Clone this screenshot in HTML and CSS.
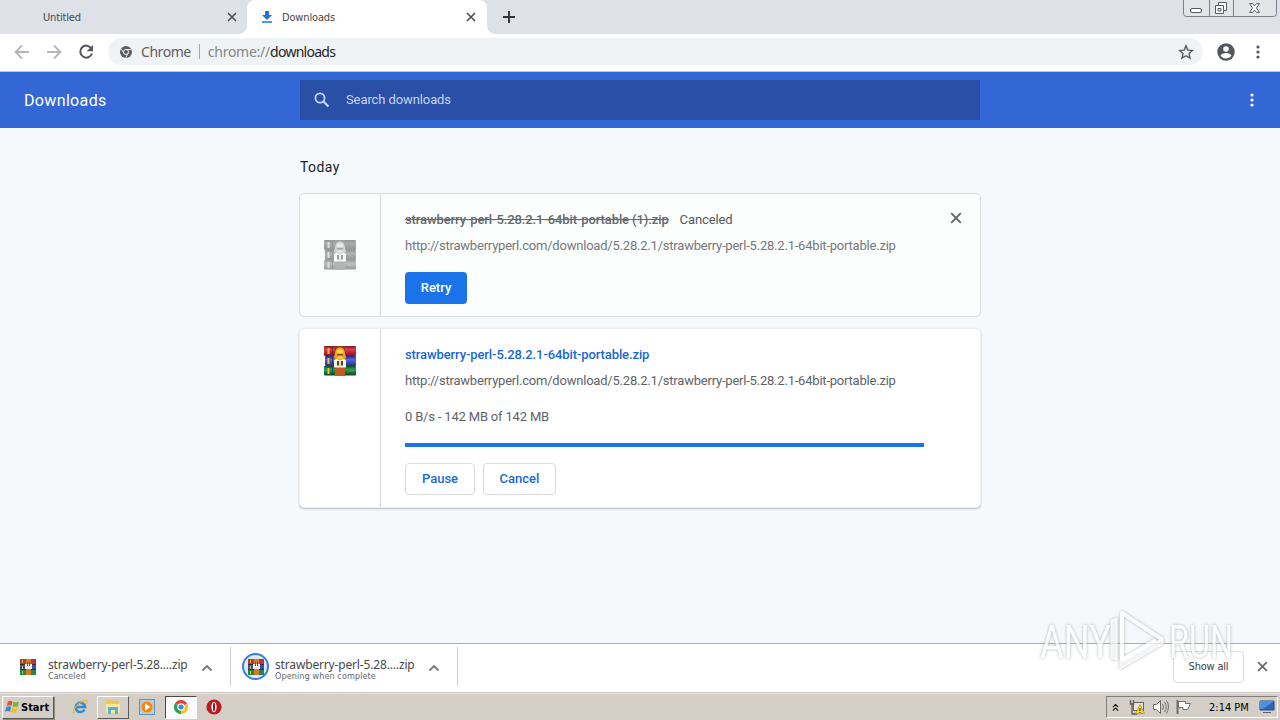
FILE: index.html
```html
<!DOCTYPE html>
<html lang="en">
<head>
<meta charset="utf-8">
<title>Downloads</title>
<link rel="stylesheet" href="styles.css">
</head>
<body>
<svg class="defs" width="0" height="0">
  <defs>
    <linearGradient id="red" x1="0" y1="0" x2="0" y2="1"><stop offset="0" stop-color="#7c1820"/><stop offset=".35" stop-color="#e03a50"/><stop offset="1" stop-color="#8a0f20"/></linearGradient>
    <linearGradient id="blue" x1="0" y1="0" x2="0" y2="1"><stop offset="0" stop-color="#252c78"/><stop offset=".35" stop-color="#5068dc"/><stop offset="1" stop-color="#252c88"/></linearGradient>
    <linearGradient id="green" x1="0" y1="0" x2="0" y2="1"><stop offset="0" stop-color="#0c4d26"/><stop offset=".35" stop-color="#28a050"/><stop offset="1" stop-color="#084820"/></linearGradient>
    <symbol id="rar" viewBox="0 0 32 30">
      <rect x="0" y="0" width="32" height="10" rx="1" fill="url(#red)"/>
      <rect x="1" y="10" width="31" height="10" rx="1" fill="url(#blue)"/>
      <rect x="0" y="20" width="32" height="9.500" rx="1" fill="url(#green)"/>
      <path d="M4.500 2v6M4.500 12v6M4.500 22v6" stroke="#f0c030" stroke-width="2"/>
      <path d="M8.500 1v8M8.500 11v8M8.500 21v8" stroke="#222" stroke-opacity=".5"/>
      <path d="M24 25h6" stroke="#60c080" stroke-opacity=".6"/>
      <rect x="11" y="0" width="10" height="30" fill="#c05a22"/>
      <path d="M11 0h10v5H11z" fill="#943528"/>
      <path d="M11.500 6q0-4.500 4.500-4.500T20.500 6l1.500 5-2 4h-8l-2-4z" fill="#f2a51c"/>
      <path d="M13 4.500q3-2.500 6 0v2.500h-6z" fill="#ffdc48"/>
      <path d="M13 8h6v1.500h-6z" fill="#8a4a1c"/>
      <path d="M13.500 10.500h5v2h-5z" fill="#ffd45c"/>
      <path d="M10 14l3-1 3 2 3-2 3 1v7.500H10z" fill="#f9f4ea"/>
      <path d="M13 15h2v4.500h-2zM17 15h2v4.500h-2z" fill="#56402e"/>
      <path d="M15 14h2v7h-2z" fill="#f3dcae"/>
    </symbol>
    <symbol id="rar-small" viewBox="0 0 16 16">
      <path d="M0 0h16v5H0z" fill="#bd3045"/><path d="M0 5h16v6H0z" fill="#414daf"/><path d="M0 11h16v5H0z" fill="#1c8a48"/>
      <path d="M0 5.500h16M0 10.500h16" stroke="#24314e"/>
      <path d="M2.500 1v3M2.500 7v3M2.500 12v3" stroke="#e0bb3c"/>
      <path d="M6 0h5v16H6z" fill="#d67b25"/><path d="M5 5h7v5H5z" fill="#f3efe8"/><path d="M7.500 3v4M9.500 3v4" stroke="#963a2c"/>
    </symbol>
    <symbol id="cross" viewBox="0 0 10 10"><path d="M1 1l8 8M9 1l-8 8" fill="none" stroke="currentColor" stroke-width="1.500"/></symbol>
    <symbol id="chevron" viewBox="0 0 12 8"><path d="M1.500 6.500L6 2l4.500 4.500" fill="none" stroke="currentColor" stroke-width="1.800"/></symbol>
    <symbol id="dots" viewBox="0 0 4 14"><circle cx="2" cy="2" r="1.600"/><circle cx="2" cy="7" r="1.600"/><circle cx="2" cy="12" r="1.600"/></symbol>
  </defs>
</svg>

<div class="screen">
  <div class="tabstrip">
    <div class="tab tab-idle"><span class="tab-title untitled">Untitled</span><svg class="x10"><use href="#cross"/></svg></div>
    <div class="tab tab-active">
      <svg class="dl-icon" viewBox="0 0 10 12"><path d="M3 0h4v4h3L5 9 0 4h3z" fill="#1a73e8"/><path d="M0 11h10" stroke="#1a73e8" stroke-width="1.500"/></svg>
      <span class="tab-title">Downloads</span><svg class="x10"><use href="#cross"/></svg>
    </div>
    <svg class="plus" viewBox="0 0 12 12"><path d="M6 0v12M0 6h12" stroke="#303338" stroke-width="1.900"/></svg>
    <svg class="window-controls" viewBox="0 0 94 18">
      <path d="M.5 0v13.500q0 3 3 3h87q3 0 3-3V0M26.500 0v16M50.500 0v16" fill="#e2e4e8" stroke="#7b7f86"/>
      <rect x="7.500" y="8.500" width="11" height="4" rx="1.500" fill="#fff" stroke="#55585e"/>
      <path d="M35.500 2.500h8v8h-3v3h-8v-8h3z" fill="#fff" stroke="#55585e"/><path d="M35.500 5.500h5v5M35 8.500h3v2.500h-3z" fill="none" stroke="#55585e"/>
      <path d="M66.500 3.500h3l2 2.500 2-2.500h3l-3 4.500 3 4.500h-3l-2-2.500-2 2.500h-3l3-4.500z" fill="#fff" stroke="#65686e"/>
    </svg>
  </div>

  <div class="toolbar">
    <svg class="nav" viewBox="0 0 16 16"><path d="M15 8H2M8 1.500L1.500 8 8 14.500" fill="none" stroke="#b4b6b9" stroke-width="1.800"/></svg>
    <svg class="nav" viewBox="0 0 16 16"><path d="M1 8h13M8 1.500L14.500 8 8 14.500" fill="none" stroke="#b4b6b9" stroke-width="1.800"/></svg>
    <svg class="nav" viewBox="0 0 16 16"><path d="M13.300 4.300A6 6 0 1 0 14 9.500" fill="none" stroke="#53565a" stroke-width="2"/><path d="M15 1v6.300H8.700z" fill="#53565a"/></svg>
    <div class="omnibox">
      <svg class="site-icon" viewBox="0 0 12 12"><circle cx="6" cy="6" r="6" fill="#5a5d61"/><circle cx="6" cy="6" r="2.500" fill="none" stroke="#f1f3f4"/><path d="M6 3.500h5.200M3.800 7.200L1.200 2.800M8.200 7.200L5.600 11.800" stroke="#f1f3f4" stroke-width=".9"/></svg>
      <span class="site-name">Chrome</span><i class="divider"></i><span class="scheme">chrome://</span><span class="host">downloads</span>
      <svg class="star" viewBox="0 0 16 16"><path d="M8 1.800l1.800 4.300 4.700.4L11 9.600l1 4.500-4-2.400-4 2.400 1-4.500-3.500-3.100 4.700-.4z" fill="none" stroke="#53565a" stroke-width="1.400"/></svg>
    </div>
    <svg class="avatar" viewBox="0 0 18 18"><circle cx="9" cy="9" r="8.700" fill="#53565a"/><circle cx="9" cy="6" r="2.800" fill="#fff"/><path d="M3.500 12.500Q5 9.900 9 9.900t5.500 2.600Q12.500 15.500 9 15.500t-5.500-3z" fill="#fff"/></svg>
    <svg class="menu"><use href="#dots"/></svg>
  </div>

  <header class="page-header">
    <h1>Downloads</h1>
    <div class="search"><svg viewBox="0 0 16 16"><circle cx="6" cy="6" r="4.600" fill="none" stroke="currentColor" stroke-width="1.800"/><path d="M9.500 9.500l5 5" stroke="currentColor" stroke-width="2.200"/></svg><span>Search downloads</span></div>
    <svg class="header-menu"><use href="#dots"/></svg>
  </header>

  <main>
    <h2>Today</h2>
    <section class="card canceled">
      <div class="card-icon"><svg><use href="#rar"/></svg></div>
      <div class="card-body">
        <div class="title-row"><span class="name">strawberry-perl-5.28.2.1-64bit-portable (1).zip</span><span class="tag">Canceled</span></div>
        <div class="url">http://strawberryperl.com/download/5.28.2.1/strawberry-perl-5.28.2.1-64bit-portable.zip</div>
        <button class="btn retry">Retry</button>
      </div>
      <svg class="remove"><use href="#cross"/></svg>
    </section>
    <section class="card active">
      <div class="card-icon"><svg><use href="#rar"/></svg></div>
      <div class="card-body">
        <div class="title-row"><span class="name">strawberry-perl-5.28.2.1-64bit-portable.zip</span></div>
        <div class="url">http://strawberryperl.com/download/5.28.2.1/strawberry-perl-5.28.2.1-64bit-portable.zip</div>
        <div class="progress-text">0 B/s - 142 MB of 142 MB</div>
        <div class="progress"></div>
        <div class="actions"><button class="btn pause">Pause</button><button class="btn cancel">Cancel</button></div>
      </div>
    </section>
  </main>

  <footer class="shelf">
    <div class="item first"><svg class="file-icon"><use href="#rar-small"/></svg><div class="labels"><div class="file">strawberry-perl-5.28....zip</div><div class="state st-canceled">Canceled</div></div><svg class="chev"><use href="#chevron"/></svg></div>
    <div class="item second"><div class="ring"><svg class="file-icon"><use href="#rar-small"/></svg></div><div class="labels"><div class="file">strawberry-perl-5.28....zip</div><div class="state st-opening">Opening when complete</div></div><svg class="chev"><use href="#chevron"/></svg></div>
    <button class="show-all">Show all</button>
    <svg class="shelf-close"><use href="#cross"/></svg>
  </footer>

  <div class="taskbar">
    <div class="start"><svg viewBox="0 0 16 16"><path d="M3 2q3-1.500 5 0L7 7Q4.500 5.500 2 7z" fill="#e6532a"/><path d="M9 2.500q3 1.500 6 0l-1.500 5q-3 1-5.500 0z" fill="#72b83a"/><path d="M1.500 8q3-1.500 5 0l-1 5Q3 11.500 0 13z" fill="#3f86d8"/><path d="M7.500 8.500q3 1.500 6 0l-1.500 5q-3 1-5.500 0z" fill="#f4bd28"/></svg><span>Start</span></div>
    <svg class="ie" viewBox="0 0 16 16"><path d="M12.500 10.500A4.700 4.700 0 1 1 13 8H4" fill="none" stroke="#2c8bd4" stroke-width="2.600"/><path d="M1.500 14.500C-1 12 8 1 14 1.300q2 .5.500 4" fill="none" stroke="#e3b73c" stroke-width="1.200"/></svg>
    <div class="task raised"><svg viewBox="0 0 16 16"><path d="M1 3l1-2h5l1 1h6v12H1z" fill="#e9c85c"/><path d="M1 5h14v9H1z" fill="#f8e69a"/><path d="M3 15V9q0-1 1-1h8q1 0 1 1v6h-3v-4H6v4z" fill="#57aee0"/></svg></div>
    <svg class="player" viewBox="0 0 16 16"><rect x=".5" y=".5" width="15" height="15" fill="#a7cfee" stroke="#5c94c4"/><circle cx="8" cy="8" r="6" fill="#f08a1c" stroke="#f8c272"/><path d="M6 4.500v7L11.500 8z" fill="#fff"/></svg>
    <div class="task pressed"><svg viewBox="0 0 16 16"><path d="M8 8L1.900 4.500A7 7 0 0 1 14.100 4.500z" fill="#df4437"/><path d="M8 8L1.900 4.500A7 7 0 0 0 8 15z" fill="#2ba24c"/><path d="M8 8l6.100-3.500A7 7 0 0 1 8 15z" fill="#fbc116"/><circle cx="8" cy="8" r="3.200" fill="#4285e8" stroke="#fff" stroke-width="1.200"/></svg></div>
    <svg class="opera" viewBox="0 0 16 16"><circle cx="8" cy="8" r="7.600" fill="#b71c20"/><ellipse cx="8" cy="8" rx="2.600" ry="5.300" fill="#fff"/><ellipse cx="8" cy="8" rx="1" ry="4.500" fill="#8c1014"/></svg>
    <div class="tray">
      <svg class="up" viewBox="0 0 8 9"><path d="M1 4l3-3 3 3M1 8l3-3 3 3" fill="none" stroke="#000" stroke-width="1.200"/></svg>
      <svg class="net" viewBox="0 0 18 16"><rect x="5.500" y="3.500" width="10" height="8" fill="#e7e6e1" stroke="#66645f"/><path d="M2.500 1v4h3V1M4 5v10h5" fill="none" stroke="#5b5853" stroke-width="1.300"/><path d="M12 5.500l4.500 9h-9z" fill="#ffdc20" stroke="#a88810" stroke-width=".7"/><path d="M12 9v3M12 13v1" stroke="#111"/></svg>
      <svg class="vol" viewBox="0 0 17 16"><path d="M1.500 5.500h3l4-4v13l-4-4h-3z" fill="#fff" stroke="#6b6864"/><path d="M10.500 5q2 3 0 6M12.500 3q3.500 5 0 10M14.500 1.500q4 6.500 0 13" fill="none" stroke="#74716d"/></svg>
      <svg class="flag" viewBox="0 0 18 16"><path d="M2.500 1v14" stroke="#706d69" stroke-width="2"/><path d="M3.500 2.500h7v2h5l-3 6H8v-2H3.500z" fill="#fff" stroke="#706d69"/></svg>
      <span class="clock">2:14 PM</span>
      <svg class="desktop" viewBox="0 0 16 14"><path d="M1 1h14v9H1z" fill="#2b67b8" stroke="#264c80"/><path d="M1 1h14L4 9H1z" fill="#508fdc"/><path d="M4 12.500h8" stroke="#5a6270"/></svg>
    </div>
  </div>
  <svg class="watermark" viewBox="0 0 200 68">
    <g class="wm-text"><text x="4" y="51" textLength="71" lengthAdjust="spacingAndGlyphs">ANY</text><text x="133" y="51" textLength="64" lengthAdjust="spacingAndGlyphs">RUN</text></g>
    <path class="wm-band" d="M75 13l6-2v42l-6-2zM84 62v-8l43-23v6z"/>
    <path class="wm-line" d="M86 53V6l41 27M86 53l34-20"/>
  </svg>
</div>
</body>
</html>
```
FILE: styles.css
```css
* { box-sizing: border-box; }
body { margin: 0; overflow: hidden; font-family: Roboto, "Liberation Sans", sans-serif; }
svg { display: block; flex: none; }
.defs { position: absolute; }
.screen { position: relative; display: flex; flex-direction: column; width: 1280px; height: 720px; background: #f6f9fb; }
h1, h2 { margin: 0; font-weight: 400; }
button { font: inherit; padding: 0; }
.x10 { width: 10px; height: 10px; margin-left: auto; }

.tabstrip { display: flex; height: 34px; background: #dee1e7; font: 11px "DejaVu Sans Condensed", sans-serif; letter-spacing: -.15px; color: #45484d; }
.tab { display: flex; align-items: center; height: 34px; }
.tab-idle { width: 247px; padding: 0 10px 0 43px; }
.tab-active { position: relative; width: 240px; padding: 0 11px 0 15px; background: #fff; border-radius: 8px 8px 0 0; }
.tab-active::before, .tab-active::after { content: ""; position: absolute; bottom: 0; width: 8px; height: 8px; }
.tab-active::before { left: -8px; background: radial-gradient(circle at 0 0, transparent 7.5px, #fff 8px); }
.tab-active::after { right: -8px; background: radial-gradient(circle at 100% 0, transparent 7.5px, #fff 8px); }
.tab-title { white-space: nowrap; }
.dl-icon { width: 10px; height: 12px; margin-right: 10px; }
.plus { width: 12px; height: 12px; margin: 11px 0 0 16px; }
.window-controls { width: 94px; height: 18px; margin-left: auto; margin-right: 3px; }

.toolbar { display: flex; align-items: center; height: 38px; padding: 0 20px 2px 14px; background: #fff; border-bottom: 1px solid #b9c8e8; }
.nav { width: 16px; height: 16px; margin-right: 16px; }
.omnibox { display: flex; align-items: center; width: 1095px; height: 27px; margin-left: -2px; padding: 0 9px 0 12px; border-radius: 14px; background: #f0f3f5; font: 14px "Noto Sans", sans-serif; color: #5b5e62; }
.site-icon { width: 12px; height: 12px; margin-right: 9px; }
.site-name { letter-spacing: -.45px; }
.divider { width: 1px; height: 15px; margin: 0 8px; background: #a5a8ac; }
.scheme { color: #83868a; letter-spacing: -.25px; }
.host { color: #222529; letter-spacing: -.72px; }
.star { width: 16px; height: 16px; margin-left: auto; }
.avatar { width: 18px; height: 18px; margin-left: 14px; }
.menu { width: 4px; height: 14px; margin-left: auto; fill: #53565a; }

.page-header { display: flex; align-items: center; height: 56px; padding: 0 26px 0 24px; background: #3367d6; color: #fff; }
h1 { width: 276px; font-size: 16px; letter-spacing: .35px; }
.search { display: flex; align-items: center; width: 680px; height: 40px; padding-left: 14px; background: #294fa7; color: #c8d5f2; font-size: 13px; letter-spacing: -.1px; }
.search span { padding-bottom: 2px; }
.search svg { width: 16px; height: 16px; margin-right: 16px; }
.header-menu { width: 4px; height: 14px; margin-left: auto; fill: #fff; }

main { height: 515px; padding: 29px 299px 0; }
h2 { height: 36px; font-size: 14px; line-height: 21px; letter-spacing: .4px; color: #202124; padding-left: 1px; }
.card { display: flex; width: 682px; border: 1px solid #d9dddf; border-radius: 5px; background: #fff; font-size: 13px; }
.card-icon { width: 81px; border-right: 1px solid #dadcde; padding-left: 24px; }
.card-icon svg { width: 32px; height: 30px; }
.card-body { width: 544px; padding-top: 16px; padding-left: 24px; }
.title-row { display: flex; gap: 11px; height: 20px; line-height: 20px; letter-spacing: -.1px; }
.url { height: 20px; line-height: 20px; margin-top: 6px; color: #75787b; white-space: nowrap; letter-spacing: -.21px; }
.canceled { height: 124px; background: #fbfefd; }
.canceled .card-icon { padding-top: 46px; }
.canceled .card-icon svg { filter: grayscale(1); opacity: .5; }
.canceled .name { color: #66696c; text-decoration: line-through; font-weight: 500; }
.tag { color: #55585c; }
.remove { width: 12px; height: 12px; margin: 18px 0 0 25px; color: #5f6368; }
.active { height: 180px; margin-top: 11px; border-color: #eceef0; box-shadow: 0 1px 2px #b6b9bb; }
.active .card-icon { padding-top: 17px; }
.active .name { color: #1967d2; font-weight: 500; }
.active .url, .progress-text { color: #5f6368; }
.progress-text { height: 20px; line-height: 20px; margin-top: 16px; letter-spacing: -.18px; }
.progress { width: 519px; height: 4px; margin-top: 16px; background: #1a73e8; }
.btn { height: 32px; border-radius: 4px; font-size: 13px; font-weight: 500; padding-bottom: 1px; }
.retry { width: 62px; margin-top: 16px; border: 0; background: #1a73e8; color: #fff; }
.actions { display: flex; gap: 8px; margin-top: 16px; }
.pause, .cancel { border: 1px solid #dadce0; background: #fff; color: #1a6ad0; }
.pause { width: 70px; }
.cancel { width: 73px; }

.shelf { display: flex; align-items: center; height: 50px; padding-right: 13px; padding-bottom: 3px; border-top: 1px solid #aaadb0; border-bottom: 1px solid #c5c2bd; background: #fff; }
.item { display: flex; align-items: center; height: 39px; border-right: 1px solid #cfd1d3; font-family: "Noto Sans", sans-serif; }
.first { width: 231px; padding-left: 20px; }
.second { width: 227px; padding-left: 11px; }
.file-icon { width: 16px; height: 16px; }
.first .file-icon { margin-right: 12px; }
.ring { display: flex; align-items: center; justify-content: center; width: 27px; height: 27px; margin-right: 6px; border: 2px solid #3b7de0; border-radius: 50%; background: #dfe9f8; }
.labels { padding-top: 5px; }
.file { width: 146px; font-size: 12px; line-height: 13px; letter-spacing: -.16px; color: #45484c; white-space: nowrap; }
.state { font: 9px/10px "DejaVu Sans Condensed", sans-serif; color: #66696d; white-space: nowrap; }
.st-opening { letter-spacing: .09px; }
.chev { width: 12px; height: 8px; margin-left: 7px; margin-top: 2px; color: #75787c; }
.show-all { width: 71px; height: 32px; margin-left: auto; border: 1px solid #dadce0; border-radius: 4px; background: #fff; font: 11px "DejaVu Sans Condensed", sans-serif; letter-spacing: -.2px; color: #3c4043; }
.shelf-close { width: 11px; height: 11px; margin-left: 13px; margin-right: -1px; color: #65686c; }

.taskbar { display: flex; align-items: center; height: 27px; padding-left: 2px; padding-right: 2px; background: #d5cec7; border-top: 1px solid #ece8e2; }
.start { display: flex; align-items: center; width: 52px; height: 23px; padding-left: 2px; border: 1px solid; border-color: #fff #5d5954 #5d5954 #fff; box-shadow: 1px 1px 0 #8d8983; font: bold 11px "DejaVu Sans Condensed", sans-serif; }
.start svg { width: 15px; height: 16px; margin-right: 1px; }
.ie { width: 16px; height: 16px; margin-left: 18px; }
.task { display: flex; align-items: center; justify-content: center; width: 32px; height: 23px; border: 1px solid; }
.task svg { width: 16px; height: 16px; }
.raised { margin-left: 9px; border-color: #fff #5d5954 #5d5954 #fff; }
.player { width: 16px; height: 16px; margin-left: 10px; }
.pressed { margin-left: 10px; background: #fafafa; border-color: #4c4945 #fff #fff #4c4945; }
.opera { width: 16px; height: 16px; margin-left: 9px; }
.tray { display: flex; align-items: center; width: 172px; height: 22px; margin-left: auto; padding-left: 5px; border: 1px solid; border-color: #817d78 #fff #fff #817d78; font: 11px "DejaVu Sans Condensed", sans-serif; }
.up { width: 7px; height: 9px; }
.net { width: 18px; height: 16px; margin-left: 9px; }
.vol { width: 17px; height: 16px; margin-left: 6px; }
.flag { width: 18px; height: 16px; margin-left: 6px; }
.clock { width: 40px; margin-left: 16px; white-space: nowrap; }
.desktop { width: 16px; height: 14px; margin-left: 10px; }

.watermark { position: absolute; left: 1036px; top: 607px; width: 200px; height: 68px; overflow: visible; filter: drop-shadow(0 0 1.5px #8f9598); opacity: .72; }
.wm-text { font: 46px Roboto, sans-serif; fill: #fff; }
.wm-band { fill: #f0f1f2; stroke: #fff; stroke-width: 1px; }
.wm-line { fill: none; stroke: #fff; stroke-width: 4px; stroke-linejoin: round; }
```
